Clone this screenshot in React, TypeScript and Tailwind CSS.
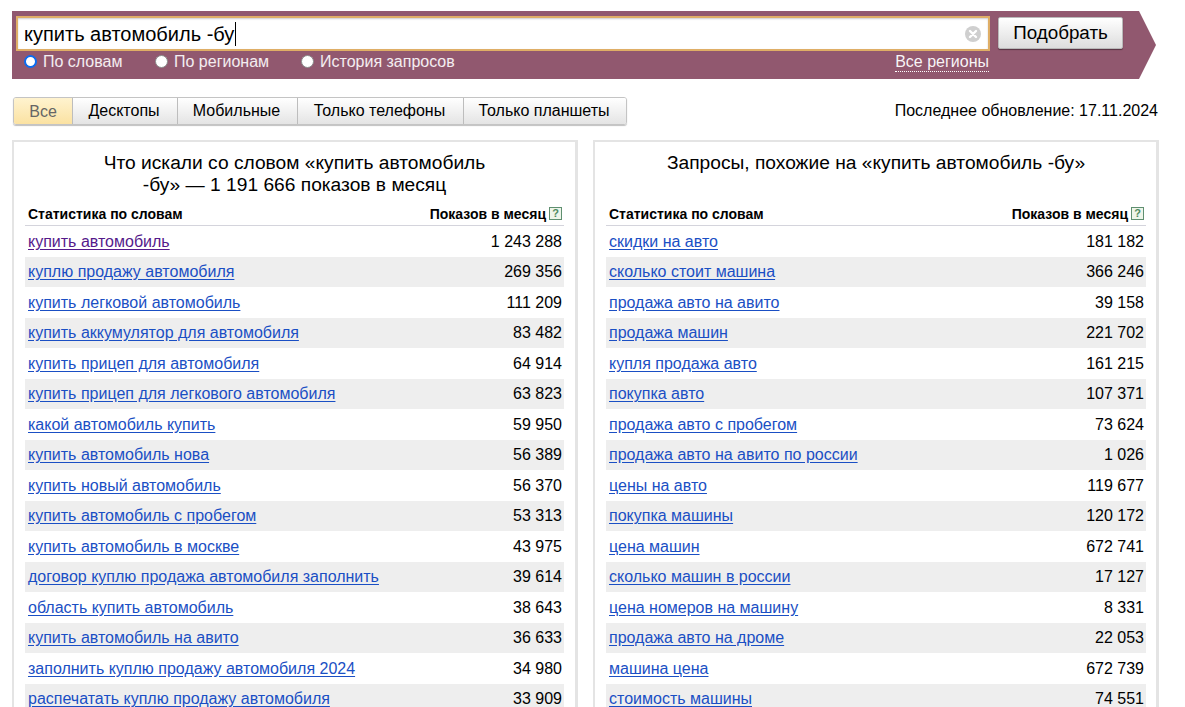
const left: [string, string][] = [
  ["купить автомобиль", "1 243 288"],
  ["куплю продажу автомобиля", "269 356"],
  ["купить легковой автомобиль", "111 209"],
  ["купить аккумулятор для автомобиля", "83 482"],
  ["купить прицеп для автомобиля", "64 914"],
  ["купить прицеп для легкового автомобиля", "63 823"],
  ["какой автомобиль купить", "59 950"],
  ["купить автомобиль нова", "56 389"],
  ["купить новый автомобиль", "56 370"],
  ["купить автомобиль с пробегом", "53 313"],
  ["купить автомобиль в москве", "43 975"],
  ["договор куплю продажа автомобиля заполнить", "39 614"],
  ["область купить автомобиль", "38 643"],
  ["купить автомобиль на авито", "36 633"],
  ["заполнить куплю продажу автомобиля 2024", "34 980"],
  ["распечатать куплю продажу автомобиля", "33 909"],
];
const right: [string, string][] = [
  ["скидки на авто", "181 182"],
  ["сколько стоит машина", "366 246"],
  ["продажа авто на авито", "39 158"],
  ["продажа машин", "221 702"],
  ["купля продажа авто", "161 215"],
  ["покупка авто", "107 371"],
  ["продажа авто с пробегом", "73 624"],
  ["продажа авто на авито по россии", "1 026"],
  ["цены на авто", "119 677"],
  ["покупка машины", "120 172"],
  ["цена машин", "672 741"],
  ["сколько машин в россии", "17 127"],
  ["цена номеров на машину", "8 331"],
  ["продажа авто на дроме", "22 053"],
  ["машина цена", "672 739"],
  ["стоимость машины", "74 551"],
];

function Help() {
  return (
    <span className="mb-[2px] flex h-[13px] w-[13px] items-center justify-center border border-[#5f8f70] bg-[#eef5ea] text-[11px] font-bold leading-none text-[#4f8a5f]">
      ?
    </span>
  );
}

function Panel({
  title,
  rows,
  visited,
  padRight,
}: {
  title: React.ReactNode;
  rows: [string, string][];
  visited?: boolean;
  padRight: string;
}) {
  return (
    <section className={`h-[580px] w-[566px] shrink-0 border-2 border-r-[3px] border-b-0 border-[#e4e4e4] pl-[11px] ${padRight}`}>
      <h2 className="mx-auto flex h-[57px] w-[441px] items-start justify-center pt-[10px] text-center text-[19.2px] font-normal leading-[22px] text-black">
        <span>{title}</span>
      </h2>
      <div className="flex h-[27px] items-center justify-between border-b border-[#d4d4dc] pl-[3px] pt-[4px] text-[14px] font-bold text-black">
        <span>Статистика по словам</span>
        <span className="flex items-center gap-[3px] pr-[2px]">
          Показов в месяц
          <Help />
        </span>
      </div>
      <div>
        {rows.map(([word, count], i) => (
          <div
            key={word}
            className={`flex h-[30.5px] items-center justify-between pl-[3px] pr-[2px] pt-[1px] text-[16px] ${i % 2 === 1 ? "bg-[#eeeeee]" : ""}`}
          >
            <a
              href="#"
              className={`underline underline-offset-2 ${visited && i === 0 ? "text-[#551a8b]" : "text-[#1a4fc4]"}`}
            >
              {word}
            </a>
            <span className="text-black">{count}</span>
          </div>
        ))}
      </div>
    </section>
  );
}

function Radio({ label, checked, className }: { label: string; checked?: boolean; className: string }) {
  return (
    <label className={`flex items-center text-[16px] text-white/90 ${className}`}>
      <span
        className={`mr-[6px] h-[13px] w-[13px] shrink-0 rounded-full bg-white ${checked ? "border-[2.5px] border-[#0b6cf0]" : "border border-[#8a8a8a]"}`}
      />
      {label}
    </label>
  );
}

const tabs = ["Десктопы", "Мобильные", "Только телефоны", "Только планшеты"];
const tabW = ["w-[105px]", "w-[120px]", "w-[166px]", "w-[163px]"];

export default function App() {
  return (
    <div className="h-[707px] w-[1185px] overflow-hidden bg-white font-['Liberation_Sans',Arial,sans-serif] text-black">
      <header className="ml-[12px] mt-[11px] flex h-[68px] w-[1144px] bg-[#91586f] pl-[4px] pt-[5px] [clip-path:polygon(0_0,1127px_0,1144px_34px,1127px_100%,0_100%)]">
        <div className="w-[974px]">
          <div className="flex h-[35px] items-center border-2 border-[#dfae66] bg-white pl-[6px] pr-[7px] shadow-[inset_0_1px_2px_rgba(0,0,0,0.2)]">
            <span className="border-r border-black pr-[1px] text-[20px] leading-[24px]">купить автомобиль -бу</span>
            <svg className="ml-auto h-[16px] w-[16px]" viewBox="0 0 16 16" aria-hidden="true">
              <circle cx="8" cy="8" r="8" fill="#cfcfcf" />
              <path d="M5 5l6 6M11 5l-6 6" stroke="#ffffff" strokeWidth="2.4" strokeLinecap="round" />
            </svg>
          </div>
          <div className="flex h-[21px] items-center pl-[8px]">
            <Radio label="По словам" checked className="w-[131px]" />
            <Radio label="По регионам" className="w-[146px]" />
            <Radio label="История запросов" className="w-[200px]" />
            <a href="#" className="ml-auto mr-[1px] mt-[1px] border-b border-dotted border-white text-[16px] leading-[18px] text-white/95">
              Все регионы
            </a>
          </div>
        </div>
        <button className="ml-[8px] mt-[1px] h-[32px] w-[125px] rounded-[2px] border border-[#b9b9b9] bg-gradient-to-b from-white to-[#dddddd] text-[18.8px] text-black shadow-[0_1px_1px_rgba(0,0,0,0.4)]">
          Подобрать
        </button>
      </header>

      <div className="mx-[13px] mt-[18px] flex h-[28px] items-center justify-between pr-[14px]">
        <div className="flex h-[28px] overflow-hidden rounded-[3px] border border-[#c4c4c4] shadow-[0_1px_1px_rgba(0,0,0,0.25)]">
          <span className="flex w-[58px] items-center justify-center bg-gradient-to-b from-[#fff3cf] to-[#fbe2a2] pt-[1px] text-[16px] text-[#666666]">
            Все
          </span>
          {tabs.map((t, i) => (
            <span
              key={t}
              className={`flex items-center justify-center border-l border-[#bdbdbd] bg-gradient-to-b from-white to-[#e4e4e4] pr-[2px] text-[16px] text-black ${tabW[i]}`}
            >
              {t}
            </span>
          ))}
        </div>
        <span className="text-[16px]">Последнее обновление: 17.11.2024</span>
      </div>

      <main className="ml-[12px] mt-[15px] flex gap-[15px]">
        <Panel
          visited
          padRight="pr-[11px]"
          rows={left}
          title={
            <>
              Что искали со словом «купить автомобиль
              <br />
              -бу» — 1 191 666 показов в месяц
            </>
          }
        />
        <Panel padRight="pr-[10px]" rows={right} title="Запросы, похожие на «купить автомобиль -бу»" />
      </main>
    </div>
  );
}
